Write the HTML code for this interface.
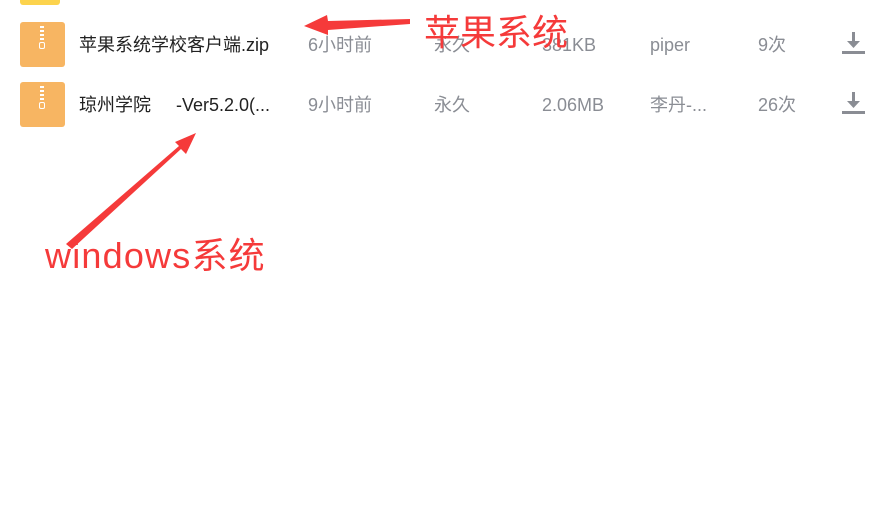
<!DOCTYPE html>
<html><head><meta charset="utf-8"><style>
body{margin:0;width:869px;height:524px;background:#fff;position:relative;overflow:hidden;font-family:"Liberation Sans","Noto Sans CJK SC",sans-serif}
.a{position:absolute;white-space:nowrap;font-size:18px;line-height:20px}
.g{color:#8a8d94}
.n{color:#222}
.ic{position:absolute;left:20px;width:45px;height:45px;background:#f7b562;border-radius:3px}
.ic i{position:absolute;left:20px;top:4px;width:4px;height:16px;background:repeating-linear-gradient(#fff 0 2px,transparent 2px 4px)}
.ic b{position:absolute;left:19px;top:20px;width:4px;height:5px;border:1px solid #fff;border-radius:2px}
.dl{position:absolute;left:842px;width:23px;height:24px}
.r{position:absolute;color:#f53a3a;font-size:36px;line-height:40px;white-space:nowrap}
</style></head><body>
<div style="position:absolute;left:20px;top:0;width:40px;height:5px;background:#fcd34d;border-radius:0 0 3px 3px"></div>

<div class="ic" style="top:22px"><i></i><b></b></div>
<div class="a n" style="left:79px;top:35px">苹果系统学校客户端.zip</div>
<div class="a g" style="left:308px;top:35px">6小时前</div>
<div class="a g" style="left:434px;top:35px">永久</div>
<div class="a g" style="left:542px;top:35px">381KB</div>
<div class="a g" style="left:650px;top:35px">piper</div>
<div class="a g" style="left:758px;top:35px">9次</div>
<svg class="dl" style="top:32px" viewBox="0 0 23 24"><path d="M11.5 0v12" stroke="#8a8d94" stroke-width="3"/><path d="M5 9h13l-6.5 7z" fill="#8a8d94"/><rect x="0" y="19" width="23" height="3" fill="#8a8d94"/></svg>

<div class="ic" style="top:82px"><i></i><b></b></div>
<div class="a n" style="left:79px;top:95px">琼州学院&nbsp;&nbsp;&nbsp;&nbsp;&nbsp;-Ver5.2.0(...</div>
<div class="a g" style="left:308px;top:95px">9小时前</div>
<div class="a g" style="left:434px;top:95px">永久</div>
<div class="a g" style="left:542px;top:95px">2.06MB</div>
<div class="a g" style="left:650px;top:95px">李丹-...</div>
<div class="a g" style="left:758px;top:95px">26次</div>
<svg class="dl" style="top:92px" viewBox="0 0 23 24"><path d="M11.5 0v12" stroke="#8a8d94" stroke-width="3"/><path d="M5 9h13l-6.5 7z" fill="#8a8d94"/><rect x="0" y="19" width="23" height="3" fill="#8a8d94"/></svg>

<svg style="position:absolute;left:0;top:0" width="869" height="524">
<path d="M410 19 L328 21 L327 15 L304 26 L328 35 L328 30 L410 24 Z" fill="#f53a3a"/>
<path d="M72 249 L181 149 L186 154 L196 133 L175 142 L179 146 L66 244 Z" fill="#f53a3a"/>
</svg>
<div class="r" style="left:424px;top:13px">苹果系统</div>
<div class="r" style="left:45px;top:236px;letter-spacing:1.2px">windows系统</div>
</body></html>
